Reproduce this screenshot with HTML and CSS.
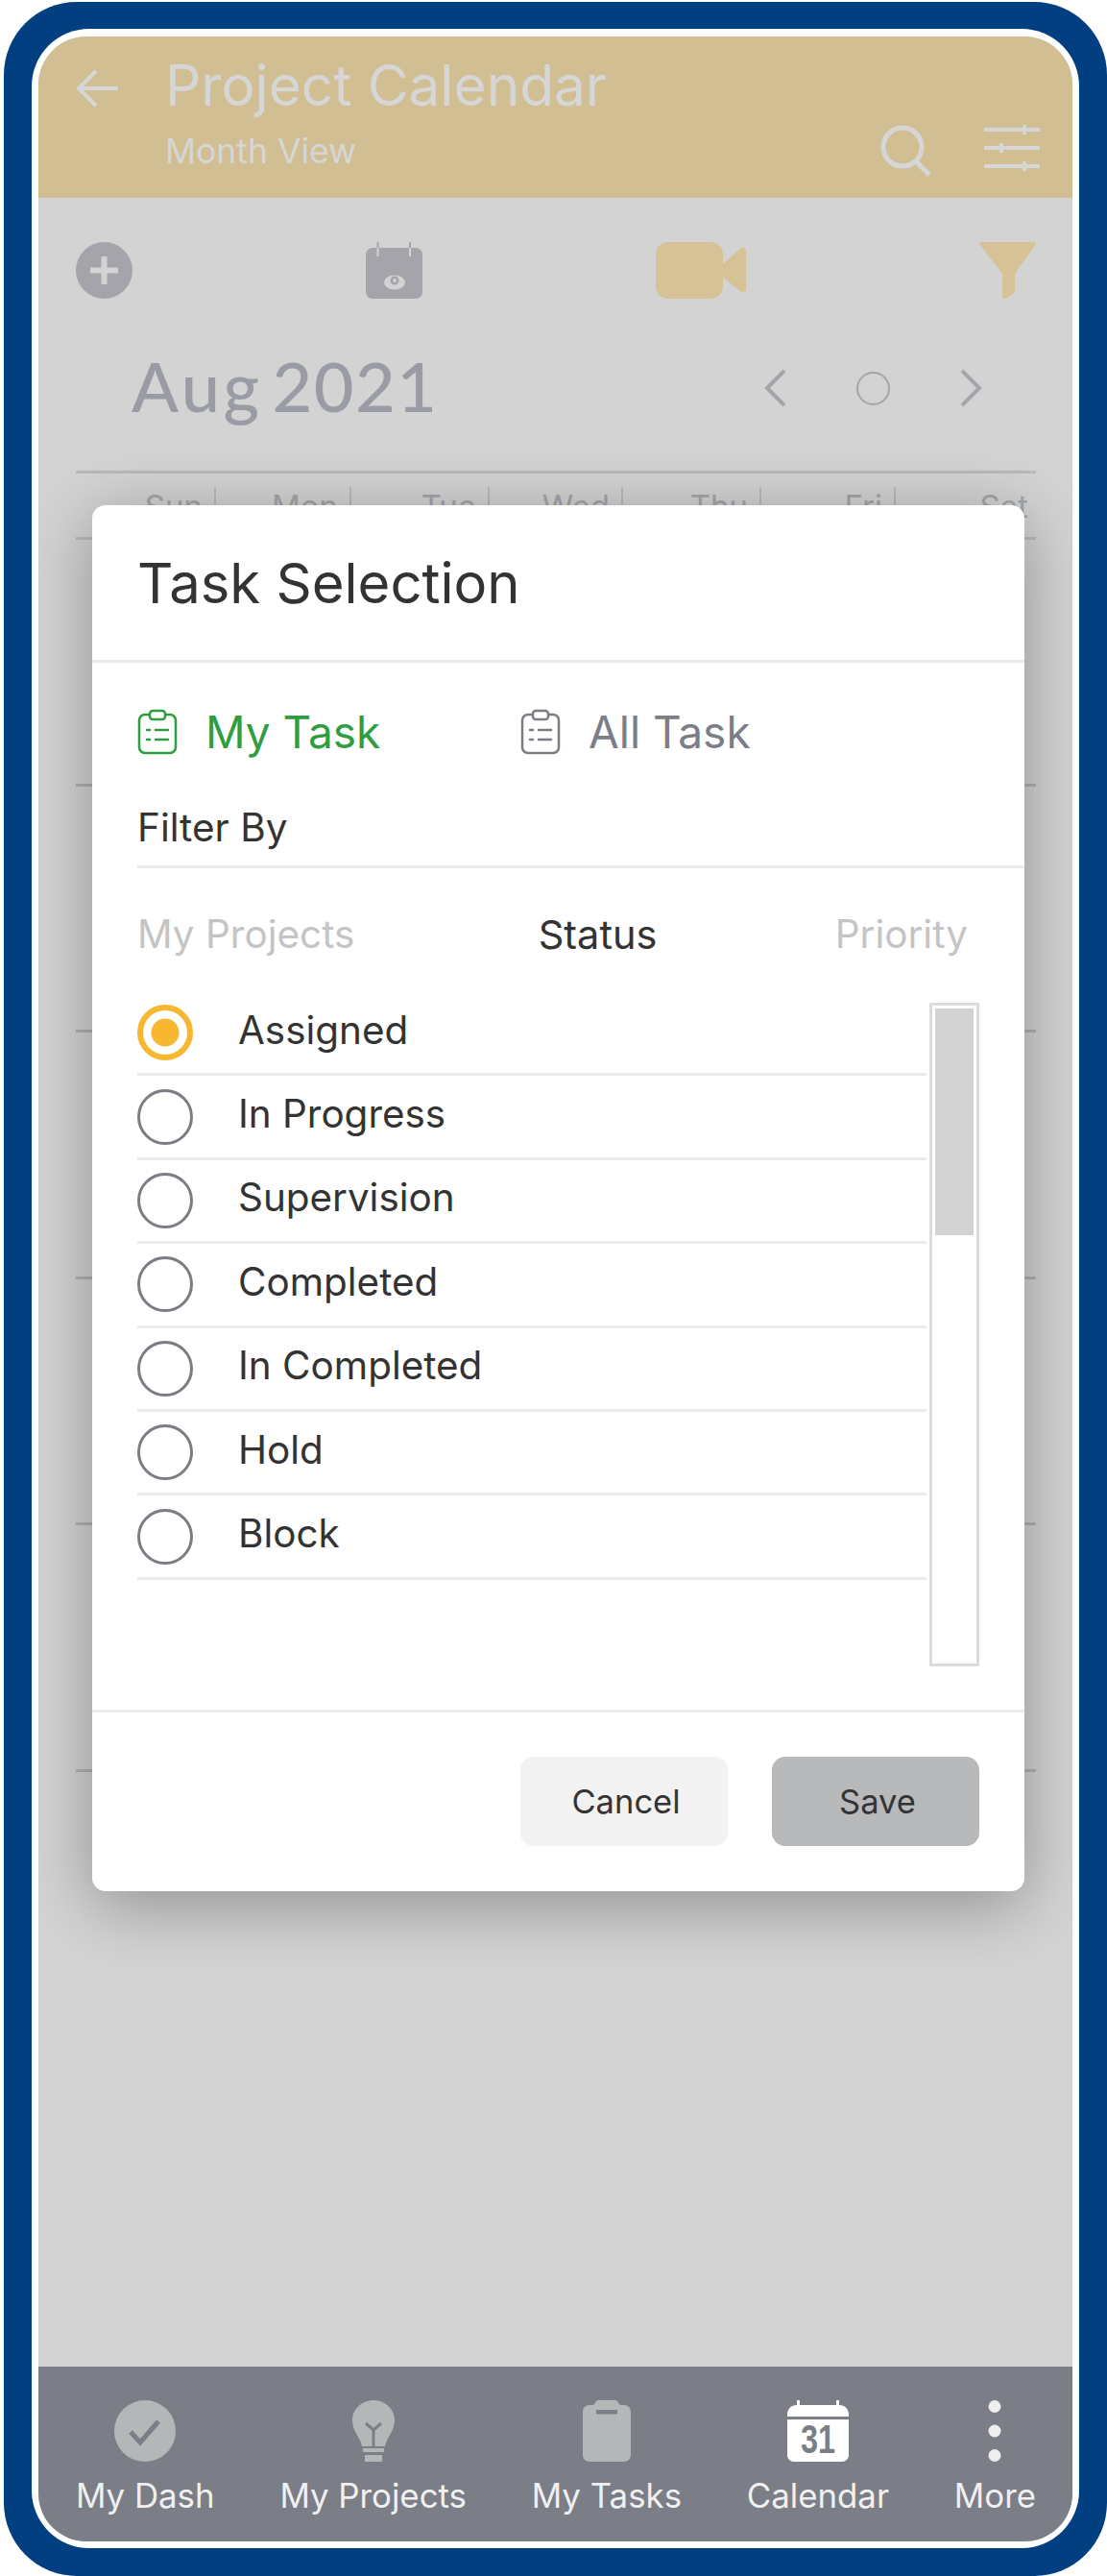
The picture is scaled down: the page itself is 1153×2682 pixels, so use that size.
FILE: index.html
```html
<!DOCTYPE html>
<html lang="en">
<head>
    <meta charset="UTF-8">
    <meta name="viewport" content="width=device-width, initial-scale=1.0">
    <title>Project Calendar</title>
    <link rel="stylesheet" href="styles.css">
</head>
<body>
    <div class="phone">
        <div class="bezel">
            <div class="screen">
                <header class="topbar">
                    <svg class="back-icon" viewBox="0 0 46 40"><path d="M21 2 3 20l18 18M3 20h41"/></svg>
                    <div class="topbar-text">
                        <h1>Project Calendar</h1>
                        <p>Month View</p>
                    </div>
                    <div class="topbar-actions">
                        <svg class="search-icon" viewBox="0 0 54 54"><circle cx="23" cy="23" r="20"/><path d="m37 38 14 14"/></svg>
                        <svg class="sliders-icon" viewBox="0 0 60 48"><path d="M1 5h58M1 24h58M1 43h58"/><path class="knob" d="M43 0v10M19 19v10M43 38v10"/></svg>
                    </div>
                </header>

                <main class="content">
                    <div class="toolbar">
                        <svg class="tool" viewBox="0 0 59 59"><circle cx="29.5" cy="29.5" r="29.5" fill="#a5a4aa"/><path d="M26.5 15h6v11.500h11.500v6h-11.500v11.500h-6v-11.500h-11.500v-6h11.500z" fill="#d3d3d3"/></svg>
                        <svg class="tool" viewBox="0 0 59 59"><rect y="6" width="59" height="53" rx="7" fill="#a5a4aa"/><path d="M12.500 0v6M46 0v6" stroke="#a5a4aa" stroke-width="2"/><path d="M12.500 6v9M46 6v9" stroke="#d3d3d3" stroke-width="2"/><ellipse cx="30" cy="42" rx="11" ry="7.500" fill="#d3d3d3"/><circle cx="30" cy="40" r="4.500" fill="#a5a4aa"/><circle cx="30" cy="40" r="2" fill="#d3d3d3"/></svg>
                        <svg class="tool-video" viewBox="0 0 94 59"><rect width="70" height="59" rx="13" fill="#d6c296"/><path d="M70 23 88 7c3-2 6-1 6 3v38c0 4-3 5-6 3L70 37z" fill="#d6c296"/></svg>
                        <svg class="tool" viewBox="0 0 59 59"><path d="M1 0h57l1 2-22 31v20l-10 6h-3V33L0 2z" fill="#d6c296"/></svg>
                    </div>

                    <div class="month-row">
                        <div class="month-name"><span>Aug</span><span>2021</span></div>
                        <div class="month-nav">
                            <svg class="chevron" viewBox="0 0 24 40"><path d="M21 2 3 20l18 18"/></svg>
                            <span class="today-dot"></span>
                            <svg class="chevron" viewBox="0 0 24 40"><path d="m3 2 18 18L3 38"/></svg>
                        </div>
                    </div>

                    <div class="calendar">
                        <div class="week-head">
                            <span>Sun</span><span>Mon</span><span>Tue</span><span>Wed</span><span>Thu</span><span>Fri</span><span>Sat</span>
                        </div>
                        <div class="week-row"></div>
                        <div class="week-row"></div>
                        <div class="week-row"></div>
                        <div class="week-row"></div>
                        <div class="week-row"></div>
                    </div>
                </main>

                <nav class="bottom-nav">
                    <div class="nav-item">
                        <svg viewBox="0 0 64 64"><circle cx="32" cy="32" r="32" fill="#b5b6b8"/><path d="m17 33 10 11 19-22" fill="none" stroke="#7b7e86" stroke-width="5"/></svg>
                        <span>My Dash</span>
                    </div>
                    <div class="nav-item">
                        <svg viewBox="0 0 44 64"><path d="M22 0c12 0 22 9 22 21 0 11-8 17-10 27H10C8 38 0 32 0 21 0 9 10 0 22 0z" fill="#b5b6b8"/><path d="M14 24l8 7 8-7M22 30v18" fill="none" stroke="#7b7e86" stroke-width="3"/><path d="M11 50h22v4H11zM13 57h18v7H13z" fill="#b5b6b8"/></svg>
                        <span>My Projects</span>
                    </div>
                    <div class="nav-item">
                        <svg viewBox="0 0 50 64"><path d="M15 0h20l4 5h4c4 0 7 3 7 7v45c0 4-3 7-7 7H7c-4 0-7-3-7-7V12c0-4 3-7 7-7h4z" fill="#b5b6b8"/><rect x="14" y="10" width="22" height="4.500" fill="#7b7e86"/></svg>
                        <span>My Tasks</span>
                    </div>
                    <div class="nav-item">
                        <svg viewBox="0 0 64 64"><path d="M10 0h3v5h38v-5h3v5c6 0 10 4 10 10v2H0v-2C0 9 4 5 10 5zM0 20h64v37c0 4-3 7-7 7H7c-4 0-7-3-7-7z" fill="#fff"/><text class="cal-date" x="32" y="55" text-anchor="middle" textLength="36" lengthAdjust="spacingAndGlyphs">31</text></svg>
                        <span>Calendar</span>
                    </div>
                    <div class="nav-item">
                        <svg viewBox="0 0 14 64"><circle cx="7" cy="6.500" r="6.500" fill="#eee"/><circle cx="7" cy="32" r="6.500" fill="#eee"/><circle cx="7" cy="57.500" r="6.500" fill="#eee"/></svg>
                        <span>More</span>
                    </div>
                </nav>

                <section class="modal">
                    <h2 class="modal-title">Task Selection</h2>

                    <div class="modal-body">
                        <div class="task-tabs">
                            <div class="task-tab active">
                                <svg viewBox="0 0 42 48"><rect x="2" y="6" width="38" height="40" rx="6"/><rect x="13" y="2" width="16" height="9" rx="3" fill="#fff"/><path d="M19 22h13M19 32h13M10 22h3M10 32h3"/></svg>
                                <span>My Task</span>
                            </div>
                            <div class="task-tab">
                                <svg viewBox="0 0 42 48"><rect x="2" y="6" width="38" height="40" rx="6"/><rect x="13" y="2" width="16" height="9" rx="3" fill="#fff"/><path d="M19 22h13M19 32h13M10 22h3M10 32h3"/></svg>
                                <span>All Task</span>
                            </div>
                        </div>

                        <div class="filter-label">Filter By</div>

                        <div class="filter-tabs">
                            <span>My Projects</span>
                            <span class="current">Status</span>
                            <span>Priority</span>
                        </div>

                        <div class="status-area">
                            <ul class="status-list">
                                <li class="selected"><span class="radio"></span><span class="status-name">Assigned</span></li>
                                <li><span class="radio"></span><span class="status-name">In Progress</span></li>
                                <li><span class="radio"></span><span class="status-name">Supervision</span></li>
                                <li><span class="radio"></span><span class="status-name">Completed</span></li>
                                <li><span class="radio"></span><span class="status-name">In Completed</span></li>
                                <li><span class="radio"></span><span class="status-name">Hold</span></li>
                                <li><span class="radio"></span><span class="status-name">Block</span></li>
                            </ul>
                            <div class="scroll-track"><div class="scroll-thumb"></div></div>
                        </div>
                    </div>

                    <div class="modal-foot">
                        <button class="btn-cancel">Cancel</button>
                        <button class="btn-save">Save</button>
                    </div>
                </section>
            </div>
        </div>
    </div>
</body>
</html>
```

FILE: styles.css
```css
* {
    box-sizing: border-box;
}
body {
    margin: 0;
    background: #fff;
    font-family: Inter, "Liberation Sans", sans-serif;
    color: #333;
}
h1, h2, p, ul {
    margin: 0;
    padding: 0;
}
svg {
    display: block;
}
.phone {
    width: 1149px;
    height: 2680px;
    margin: 2px 0 0 4px;
    padding: 28px 29px 29px 29px;
    background: #013f80;
    border-radius: 76px;
}
.bezel {
    height: 100%;
    padding: 8px 7px 7px 7px;
    background: #fff;
    border-radius: 60px;
}
.screen {
    position: relative;
    display: flex;
    flex-direction: column;
    height: 100%;
    overflow: hidden;
    background: #d3d3d3;
    border-radius: 50px;
}

/* top bar */
.topbar {
    position: relative;
    display: flex;
    flex: none;
    height: 168px;
    padding: 34px 33px 0 39px;
    background: #d1be93;
    color: #d6d6d6;
}
.back-icon {
    flex: none;
    width: 46px;
    height: 40px;
    margin-right: 47px;
}
.back-icon path, .search-icon, .sliders-icon path {
    fill: none;
    stroke: #d6d6d6;
}
.back-icon path {
    stroke-width: 4;
}
.topbar-text {
    flex: 1;
    margin-top: -12px;
}
.topbar-text h1 {
    font-size: 58.500px;
    font-weight: 400;
    line-height: 58px;
}
.topbar-text p {
    margin-top: 20px;
    font-size: 35.500px;
    line-height: 40px;
}
.topbar-actions {
    display: flex;
    align-items: flex-start;
    gap: 53px;
    margin-top: 58px;
}
.search-icon {
    width: 54px;
    height: 54px;
    stroke-width: 5;
}
.sliders-icon {
    width: 60px;
    height: 48px;
}
.sliders-icon path {
    stroke-width: 4;
}

/* calendar under the dialog */
.content {
    flex: 1;
    padding: 46px 38px 0 39px;
}
.toolbar {
    display: flex;
    align-items: center;
    justify-content: space-between;
}
.tool {
    width: 59px;
    height: 59px;
}
.tool-video {
    width: 94px;
    height: 59px;
}
.month-row {
    display: flex;
    align-items: center;
    justify-content: space-between;
    margin-top: 48px;
    padding: 0 56px 0 58px;
}
.month-name {
    display: flex;
    gap: 10px;
    font-family: Lato, sans-serif;
    font-size: 72px;
    font-weight: 500;
    letter-spacing: 1.500px;
    line-height: 84px;
    color: #999ca4;
}
.month-name span:first-child {
    letter-spacing: 3.500px;
}
.month-nav {
    display: flex;
    align-items: center;
    gap: 72px;
    margin-top: 6px;
}
.chevron {
    width: 24px;
    height: 40px;
}
.chevron path {
    fill: none;
    stroke: #a3a5aa;
    stroke-width: 4;
}
.today-dot {
    width: 35px;
    height: 35px;
    border: 2px solid #a3a5aa;
    border-radius: 50%;
}
.calendar {
    margin-top: 47px;
    border-top: 3px solid #b9b9bb;
}
.week-head {
    display: grid;
    grid-template-columns: 146px 141px 144px 139px 144px 140px 1fr;
    height: 69px;
    padding-top: 14px;
    border-bottom: 3px solid #b9b9bb;
    font-size: 33px;
    line-height: 40px;
    color: #a5a6aa;
    text-align: right;
}
.week-head span {
    padding-right: 12px;
    border-right: 2px solid #b9b9bb;
}
.week-head span:last-child {
    padding-right: 8px;
    border-right: none;
}
.week-row {
    height: 256.500px;
    border-bottom: 3px solid #b2b2b6;
}

/* bottom nav */
.bottom-nav {
    display: flex;
    flex: none;
    justify-content: space-between;
    height: 182px;
    padding: 35px 38px 0 39px;
    background: #7b7e86;
}
.nav-item {
    display: flex;
    flex-direction: column;
    align-items: center;
    color: #f0f0f0;
    font-size: 34.800px;
}
.nav-item svg {
    height: 64px;
}
.nav-item span {
    margin-top: 13px;
    line-height: 44px;
}
.cal-date {
    font-family: "Liberation Sans", sans-serif;
    font-size: 42px;
    font-weight: 700;
    fill: #7b7e86;
}

/* dialog */
.modal {
    position: absolute;
    top: 488px;
    left: 56px;
    width: 971px;
    height: 1443px;
    background: #fff;
    border-radius: 14px;
    box-shadow: 0 14px 70px rgba(0, 0, 0, 0.32);
}
.modal-title {
    height: 164px;
    padding: 47px 47px 0;
    border-bottom: 3px solid #eaeaea;
    font-size: 58px;
    font-weight: 400;
    line-height: 68px;
}
.modal-body {
    height: 1090px;
    padding-left: 47px;
}
.task-tabs {
    display: flex;
    padding-top: 47px;
}
.task-tab {
    display: flex;
    align-items: center;
    gap: 29px;
    width: 399px;
    height: 50px;
    font-size: 46px;
    color: #7b7e86;
}
.task-tab svg {
    flex: none;
    width: 42px;
    height: 48px;
    fill: none;
    stroke: #7b7e86;
    stroke-width: 2.500;
    stroke-linecap: round;
}
.task-tab.active {
    color: #2f9e41;
}
.task-tab.active svg {
    stroke: #2f9e41;
}
.filter-label {
    height: 87px;
    padding-top: 23px;
    margin-top: 30px;
    border-bottom: 3px solid #eaeaea;
    font-size: 40.500px;
    line-height: 44px;
}
.filter-tabs {
    display: flex;
    justify-content: space-between;
    padding: 46px 59px 0 0;
    font-size: 40.500px;
    line-height: 46px;
    color: #c4c4c4;
}
.filter-tabs .current {
    margin-left: 6px;
    font-size: 41.500px;
    color: #333;
}
.status-area {
    display: flex;
    margin-top: 48px;
    padding-right: 47px;
}
.status-list {
    flex: none;
    width: 822px;
    margin-top: -11px;
    list-style: none;
}
.status-list li {
    display: flex;
    align-items: center;
    gap: 47px;
    height: 87.400px;
    border-bottom: 3px solid #eaeaea;
    font-size: 40.400px;
}
.status-name {
    margin-bottom: 6px;
}
.radio {
    flex: none;
    width: 58px;
    height: 58px;
    border: 3px solid #7b7d85;
    border-radius: 50%;
}
.selected .radio {
    border: 6px solid #f7b731;
    background: radial-gradient(circle, #f7b731 0 14px, #fff 15px);
}
.scroll-track {
    flex: none;
    width: 52px;
    height: 691px;
    margin-left: 3px;
    padding: 3px;
    border: 3px solid #dcdcdc;
}
.scroll-thumb {
    height: 236px;
    background: #d2d2d2;
}
.modal-foot {
    display: flex;
    justify-content: flex-end;
    gap: 46px;
    height: 189px;
    padding: 46px 47px 0 0;
    border-top: 3px solid #eaeaea;
}
.modal-foot button {
    width: 216px;
    height: 93px;
    padding-left: 10px;
    border: none;
    border-radius: 14px;
    font-family: inherit;
    font-size: 34.500px;
    color: #333;
}
.btn-cancel {
    background: #f2f2f2;
}
.btn-save {
    background: #b8b9bb;
}
```
